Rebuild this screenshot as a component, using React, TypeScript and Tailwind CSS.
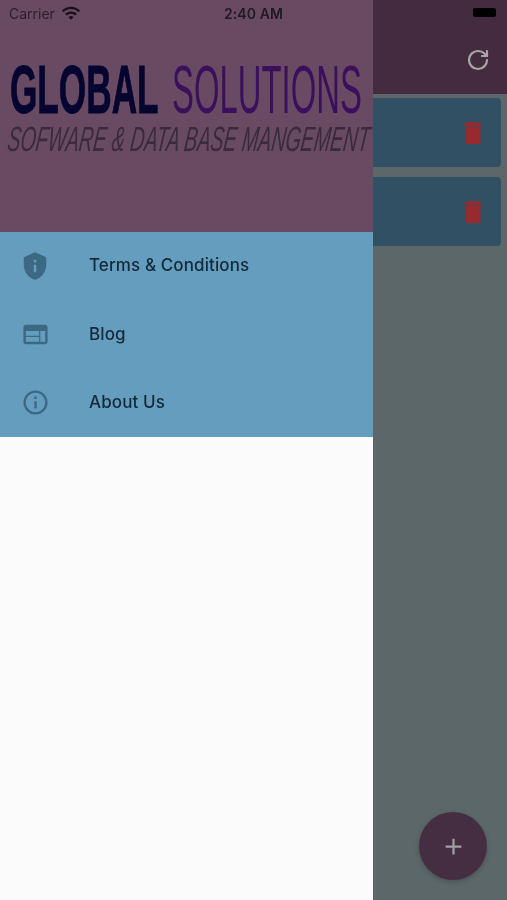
import { MdPrivacyTip, MdWeb, MdInfoOutline, MdAdd, MdWifi } from "react-icons/md";
import { RotateCw } from "lucide-react";

const items = [
  { label: "Terms & Conditions", Icon: MdPrivacyTip, size: 30 },
  { label: "Blog", Icon: MdWeb, size: 29 },
  { label: "About Us", Icon: MdInfoOutline, size: 29 },
];

function Trash() {
  return (
    <svg width="18" height="22" viewBox="0 0 18 22" className="text-[#962a2d]" fill="currentColor">
      <path d="M5 0h8l1 1h3l1 2.8H0L1 1h3z" />
      <path d="M1.5 4.6h15V21a1 1 0 0 1-1 1H2.5a1 1 0 0 1-1-1z" />
    </svg>
  );
}

function Card() {
  return (
    <div className="h-[69px] mr-[6px] bg-[#315064] rounded-r-[4px] flex items-center justify-end pr-[19px]">
      <Trash />
    </div>
  );
}

export default function App() {
  return (
    <div className="relative w-[507px] h-[900px] overflow-hidden flex font-['Inter','Liberation_Sans',sans-serif] bg-[#5b6768] blur-[0.4px]">
      <aside className="w-[373px] shrink-0 h-full flex flex-col bg-[#fbfbfb] z-10">
        <header className="h-[232px] bg-[#684b62] flex flex-col">
          <div className="h-[27px] flex items-center pl-[9px] text-[14px] text-[#2a1e2c]">
            <span>Carrier</span>
            <MdWifi size={20} className="ml-[6px] mb-[2px] text-[#1a101a]" />
            <span className="ml-[143px] font-semibold text-[14px] tracking-[0.1px] text-[#221824]">2:40 AM</span>
          </div>
          <div className="mt-[33px] h-[60px] flex items-center font-['Liberation_Sans',sans-serif] text-[69px] leading-[60px] whitespace-nowrap">
            <span className="w-[172px] pl-[10px] shrink-0 font-bold text-[#05052f]">
              <span className="inline-block origin-left [transform:scaleX(0.51)] [-webkit-text-stroke:1px_#05052f]">GLOBAL</span>
            </span>
            <span className="w-[190px] shrink-0 text-[#3c0f5c]">
              <span className="inline-block origin-left [transform:scaleX(0.476)]">SOLUTIONS</span>
            </span>
          </div>
          <div className="mt-[5px] h-[28px] pl-[8px] font-['Liberation_Sans',sans-serif] italic text-[35px] leading-[28px] text-[#3a2a3e] whitespace-nowrap">
            <span className="inline-block origin-left [transform:skewX(-7deg)_scaleX(0.56)]">SOFWARE &amp; DATA BASE MANGEMENT</span>
          </div>
        </header>
        <nav className="bg-[#659dbf] h-[205px] flex flex-col">
          {items.map(({ label, Icon, size }) => (
            <div key={label} className="h-[68.3px] flex items-center pl-[23px]">
              <div className="w-[24px] h-[32px] shrink-0 flex items-center justify-center">
                <Icon size={size} className="text-[#3d6883] shrink-0" />
              </div>
              <span className="ml-[42px] text-[17px] font-medium tracking-[0.1px] text-[#14293a]">{label}</span>
            </div>
          ))}
        </nav>
      </aside>
      <main className="flex-1 flex flex-col">
        <div className="h-[94px] bg-[#452b40] flex flex-col items-end">
          <div className="w-[23px] h-[9px] mt-[8px] mr-[11px] rounded-[2px] bg-black" />
          <RotateCw size={24} className="mt-[31px] mr-[17px] text-[#a9a6a8]" strokeWidth={2.2} />
        </div>
        <div className="flex flex-col gap-[10px] pt-[4px]">
          <Card />
          <Card />
        </div>
      </main>
      <button className="absolute left-[419px] top-[812px] w-[68px] h-[68px] rounded-full bg-[#462e42] shadow-[0_2px_5px_rgba(0,0,0,0.2)] flex items-center justify-center z-20">
        <MdAdd size={27} className="text-[#a29ea1]" />
      </button>
    </div>
  );
}
